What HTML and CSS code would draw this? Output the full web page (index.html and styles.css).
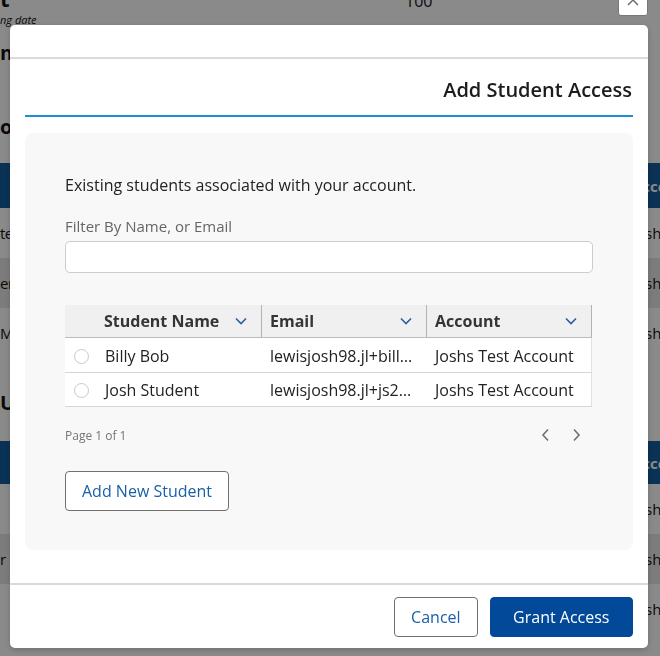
FILE: index.html
```html
<!doctype html>
<html lang="en">
<head>
    <meta charset="UTF-8">
    <meta name="viewport" content="width=device-width, initial-scale=1.0">
    <title>Add Student Access</title>
    <link rel="stylesheet" href="styles.css">
</head>
<body>
<div class="page">
    <div class="summary">
        <div class="summary-main">
            <div class="summary-title">t</div>
            <div class="summary-note">ng date</div>
        </div>
        <div class="summary-value">100</div>
    </div>
    <h3 class="bg-sub">m</h3>
    <h2 class="bg-title">ot</h2>
    <div class="bg-table">
        <div class="bg-row bg-head"><span></span><span>Account</span></div>
        <div class="bg-row"><span>te</span><span>Joshs Test Account</span></div>
        <div class="bg-row bg-alt"><span>er</span><span>Joshs Test Account</span></div>
        <div class="bg-row"><span>Ma</span><span>Joshs Test Account</span></div>
    </div>
    <h2 class="bg-title bg-title-next">U</h2>
    <div class="bg-table bg-table-next">
        <div class="bg-row bg-head"><span></span><span>Account</span></div>
        <div class="bg-row"><span></span><span>Joshs Test Account</span></div>
        <div class="bg-row bg-alt"><span>r</span><span>Joshs Test Account</span></div>
        <div class="bg-row"><span></span><span>Joshs Test Account</span></div>
    </div>
</div>

<div class="overlay"></div>

<div class="modal">
    <button class="modal-close" type="button" aria-label="Close">
        <svg width="12" height="12" viewBox="0 0 12 12">
            <path d="M1 1 L11 11 M11 1 L1 11" stroke="#666" stroke-width="1.4" fill="none"/>
        </svg>
    </button>
    <div class="modal-head"></div>
    <div class="modal-body">
        <h2 class="modal-title">Add Student Access</h2>
        <div class="panel">
            <p class="intro">Existing students associated with your account.</p>
            <label class="filter-label" for="id-filter">Filter By Name, or Email</label>
            <input class="filter-input" id="id-filter" type="text">

            <table class="students">
                <colgroup>
                    <col class="col-name">
                    <col class="col-email">
                    <col class="col-account">
                </colgroup>
                <thead>
                <tr>
                    <th class="th-name"><div class="th-inner"><span>Student Name</span>
                        <svg class="sort-icon" width="12" height="8" viewBox="0 0 12 8"><path d="M1 1.5 L6 6.5 L11 1.5" stroke="#2b5f9e" stroke-width="1.6" fill="none"/></svg></div></th>
                    <th><div class="th-inner"><span>Email</span>
                        <svg class="sort-icon" width="12" height="8" viewBox="0 0 12 8"><path d="M1 1.5 L6 6.5 L11 1.5" stroke="#2b5f9e" stroke-width="1.6" fill="none"/></svg></div></th>
                    <th><div class="th-inner"><span>Account</span>
                        <svg class="sort-icon" width="12" height="8" viewBox="0 0 12 8"><path d="M1 1.5 L6 6.5 L11 1.5" stroke="#2b5f9e" stroke-width="1.6" fill="none"/></svg></div></th>
                </tr>
                </thead>
                <tbody>
                <tr>
                    <td><div class="student-cell"><input class="student-radio" type="radio" name="student">Billy Bob</div></td>
                    <td>lewisjosh98.jl+billybob@gmail.com</td>
                    <td>Joshs Test Account</td>
                </tr>
                <tr>
                    <td><div class="student-cell"><input class="student-radio" type="radio" name="student">Josh Student</div></td>
                    <td>lewisjosh98.jl+js2@gmail.com</td>
                    <td>Joshs Test Account</td>
                </tr>
                </tbody>
            </table>

            <div class="pager">
                <span class="pager-text">Page 1 of 1</span>
                <div class="pager-nav">
                    <button class="pager-btn" type="button" aria-label="Previous page">
                        <svg width="10" height="14" viewBox="0 0 10 14"><path d="M8 1.5 L3 7 L8 12.5" stroke="#707070" stroke-width="1.6" fill="none"/></svg>
                    </button>
                    <button class="pager-btn" type="button" aria-label="Next page">
                        <svg width="10" height="14" viewBox="0 0 10 14"><path d="M2 1.5 L7 7 L2 12.5" stroke="#707070" stroke-width="1.6" fill="none"/></svg>
                    </button>
                </div>
            </div>

            <div class="add-row">
                <button class="btn" type="button">Add New Student</button>
            </div>
        </div>
    </div>
    <div class="modal-foot">
        <button class="btn" type="button">Cancel</button>
        <button class="btn btn-primary" type="button">Grant Access</button>
    </div>
</div>
</body>
</html>
```

FILE: styles.css
```css
body {
    margin: 0;
    height: 656px;
    overflow: hidden;
    background-color: #fff;
    color: #111;
    font-family: "Open Sans", "Liberation Sans", sans-serif;
}

/* page behind the dialog */
.summary {
    display: flex;
    height: 40px;
    margin-top: -14px;
}
.summary-main {
    width: 405px;
}
.summary-title {
    font-size: 22px;
    font-weight: 700;
    line-height: 24px;
}
.summary-note {
    margin-top: 2px;
    font-size: 11px;
    font-style: italic;
    line-height: 16px;
}
.summary-value {
    margin-top: 5px;
    font-size: 16px;
    line-height: 20px;
}
.bg-sub {
    margin: 14px 0 0;
    font-size: 20px;
    line-height: 26px;
}
.bg-title {
    margin: 47px 0 0;
    font-size: 20px;
    line-height: 28px;
    letter-spacing: -1px;
}
.bg-title-next {
    margin-top: 31px;
}
.bg-table {
    margin-top: 22px;
}
.bg-table-next {
    margin-top: 24px;
}
.bg-row {
    display: grid;
    grid-template-columns: 632px 1fr;
    align-items: center;
    height: 50px;
    font-size: 15px;
    white-space: nowrap;
}
.bg-row > span:first-child {
    letter-spacing: -0.5px;
}
.bg-head {
    height: 45px;
    background-color: #145d9c;
    color: #fff;
    font-weight: 700;
}
.bg-table-next .bg-head {
    height: 43px;
}
.bg-alt {
    background-color: #e6e6e6;
}
.overlay {
    position: fixed;
    top: 0;
    left: 0;
    right: 0;
    bottom: 0;
    background-color: rgba(0, 0, 0, 0.46);
}

/* dialog */
.modal {
    position: fixed;
    left: 10px;
    top: 25px;
    width: 638px;
    height: 623px;
    display: flex;
    flex-direction: column;
    background-color: #fff;
    border-radius: 5px;
    box-shadow: 0 2px 6px rgba(0, 0, 0, 0.2);
}
.modal-close {
    position: absolute;
    right: 0;
    top: -41px;
    width: 30px;
    height: 32px;
    box-sizing: border-box;
    padding: 0;
    display: flex;
    align-items: center;
    justify-content: center;
    background-color: #fff;
    border: 1px solid #777;
    border-radius: 3px;
}
.modal-head {
    flex-shrink: 0;
    height: 32px;
    border-bottom: 2px solid #dadada;
}
.modal-body {
    padding: 0 15px;
}
.modal-title {
    margin: 0;
    padding: 17px 1px 12px 0;
    text-align: right;
    font-size: 20px;
    font-weight: 600;
    line-height: 27px;
    color: #1c1c1c;
    border-bottom: 2px solid #1b8fd2;
}
.panel {
    margin-top: 16px;
    padding: 40px 40px 39px;
    background-color: #f8f8f8;
    border-radius: 8px;
}
.intro {
    margin: 0;
    font-size: 16px;
    line-height: 24px;
    color: #222;
}
.filter-label {
    display: block;
    margin-top: 19px;
    font-size: 15px;
    line-height: 20px;
    color: #666;
}
.filter-input {
    display: block;
    box-sizing: border-box;
    width: 100%;
    height: 32px;
    margin: 5px 0 0;
    padding: 0 8px;
    background-color: #fff;
    border: 1px solid #ccc;
    border-radius: 5px;
    font: inherit;
}

/* student table */
.students {
    width: 527px;
    margin-top: 32px;
    border-collapse: separate;
    border-spacing: 0;
    table-layout: fixed;
    font-size: 16px;
}
.col-name {
    width: 197px;
}
.col-email {
    width: 165px;
}
.col-account {
    width: 165px;
}
.students th {
    padding: 5px 15px 5px 8px;
    line-height: 22px;
    text-align: left;
    font-weight: 700;
    color: #353535;
    background-color: #f0f0f0;
    border-bottom: 1px solid #bbb;
    border-right: 1px solid #b3b3b3;
}
.students th.th-name {
    padding-left: 39px;
}
.th-inner {
    display: flex;
    align-items: center;
    justify-content: space-between;
}
.sort-icon {
    margin-right: -1px;
}
.students td {
    padding: 6px 8px 5px;
    line-height: 22px;
    color: #222;
    background-color: #fff;
    border-bottom: 1px solid #d6d6d6;
    white-space: nowrap;
    overflow: hidden;
    text-overflow: ellipsis;
}
.students td:first-child {
    padding-left: 9px;
}
.students tbody tr:first-child td {
    padding-top: 7px;
}
.students td:last-child {
    border-right: 1px solid #e2e2e2;
}
.student-cell {
    display: flex;
    align-items: center;
}
.student-radio {
    appearance: none;
    flex-shrink: 0;
    box-sizing: border-box;
    width: 15px;
    height: 15px;
    margin: 0 16px 0 0;
    background-color: #fff;
    border: 1px solid #c9c9c9;
    border-radius: 50%;
}

/* pager */
.pager {
    display: flex;
    align-items: center;
    justify-content: space-between;
    height: 24px;
    margin-top: 16px;
}
.pager-text {
    font-size: 12px;
    color: #757575;
}
.pager-nav {
    display: flex;
    gap: 8px;
    margin-right: 4px;
}
.pager-btn {
    width: 24px;
    height: 24px;
    padding: 0;
    display: flex;
    align-items: center;
    justify-content: center;
    background: none;
    border: 0;
}
.add-row {
    margin-top: 24px;
}

/* buttons */
.btn {
    height: 40px;
    padding: 0 16px;
    background-color: #fff;
    color: #1a5fa8;
    border: 1px solid #707070;
    border-radius: 4px;
    font-family: "Open Sans", "Liberation Sans", sans-serif;
    font-size: 16px;
}
.btn-primary {
    padding: 0 22.5px;
    background-color: #03499a;
    border-color: #03499a;
    color: #fff;
}
.modal-foot {
    margin-top: 33px;
    padding: 12px 15px 11px;
    display: flex;
    justify-content: flex-end;
    gap: 12px;
    border-top: 2px solid #dadada;
}
```
